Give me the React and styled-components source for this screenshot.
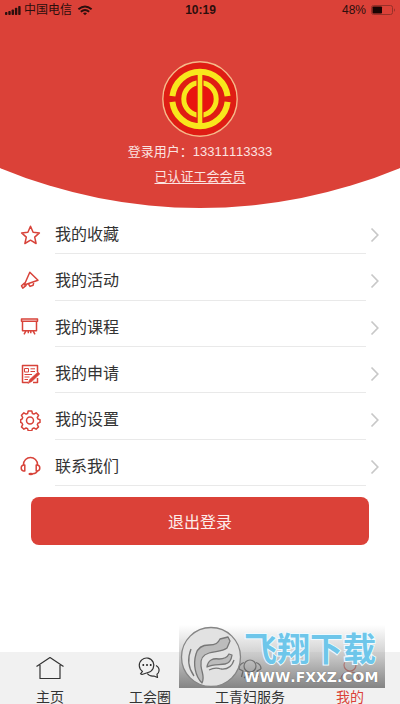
import styled, { createGlobalStyle } from "styled-components";

const GlobalStyle = createGlobalStyle`
  * {
    box-sizing: border-box;
  }
  body {
    margin: 0;
    background: #fff;
    color: #333;
    font-family: "Liberation Sans", "Noto Sans CJK SC", sans-serif;
    font-kerning: none;
  }
`;

const Page = styled.div`
  display: flex;
  flex-direction: column;
  min-height: 100vh;
`;

const Hero = styled.header`
  background: #db4138;
  clip-path: ellipse(130% 520px at 50% calc(100% - 520px));
  padding-bottom: 21px;
`;

const StatusBar = styled.div`
  display: grid;
  grid-template-columns: 1fr auto 1fr;
  align-items: center;
  height: 20px;
  padding: 0 4px 0 5px;
  color: #2c0f0d;
  font-size: 12px;
  line-height: 20px;
`;

const StatusGroup = styled.div`
  display: flex;
  align-items: center;
  justify-content: ${(props) => (props.$end ? "flex-end" : "flex-start")};
  gap: ${(props) => (props.$end ? "5px" : "3px")};
`;

const Clock = styled.time`
  font-weight: bold;
`;

const Profile = styled.div`
  display: flex;
  flex-direction: column;
  align-items: center;
  gap: 4px;
  padding-top: 41px;
  color: #fbe3e1;
  font-size: 13px;
  line-height: 21px;
`;

const ProfileText = styled.p`
  margin: 0;
`;

const ProfileLink = styled.a`
  color: inherit;
  text-decoration: underline;
  text-underline-offset: 2px;
`;

const Menu = styled.nav`
  display: grid;
  grid-auto-rows: 1fr;
  min-height: 278px;
`;

const MenuRow = styled.a`
  display: flex;
  align-items: center;
  position: relative;
  padding: 8px 20px 0;
  color: #333;
  font-size: 16px;
  line-height: 24px;
  text-decoration: none;

  &::after {
    content: "";
    position: absolute;
    right: 34px;
    bottom: 0;
    left: 55px;
    height: 1px;
    background: #e9e9e9;
  }
`;

const MenuLabel = styled.span`
  flex: 1;
  margin-left: 14px;
`;

const LogoutButton = styled.button`
  margin: 11px 31px 20px;
  height: 48px;
  border: 0;
  border-radius: 8px;
  background: #db4138;
  color: #fdeceb;
  font-family: inherit;
  font-size: 16px;
`;

const TabBar = styled.nav`
  display: flex;
  position: relative;
  margin-top: auto;
  background: #f1f1f1;
`;

const Tab = styled.a`
  display: flex;
  flex: 1;
  flex-direction: column;
  align-items: center;
  gap: 6px;
  padding-top: 4px;
  color: ${(props) => (props.$active ? "#db4138" : "#333")};
  font-size: 14px;
  line-height: 14px;
  text-decoration: none;
`;

const Watermark = styled.div`
  display: flex;
  position: absolute;
  right: 15px;
  bottom: 16px;
  width: 206px;
  height: 63px;
  padding: 1px 0 0 1px;
  background: linear-gradient(
    rgba(255, 255, 255, 0.5),
    rgba(170, 170, 170, 0.6) 50%,
    rgba(95, 95, 95, 0.75)
  );
  pointer-events: none;
`;

const WatermarkText = styled.div`
  display: flex;
  flex-direction: column;
  margin-left: 2px;
  padding-top: 4px;
  font-weight: bold;
  white-space: nowrap;
`;

const WatermarkName = styled.span`
  color: #6ec6ea;
  font-size: 33px;
  line-height: 39px;
  paint-order: stroke;
  -webkit-text-stroke: 2px #eefaff;
`;

const WatermarkUrl = styled.span`
  color: #fff;
  font-family: "DejaVu Sans", sans-serif;
  font-size: 14px;
  line-height: 16px;
  text-shadow: 0 0 1px #555;
`;

const Icon = ({ size = 20, stroke = 1.5, children }) => (
  <svg
    width={size}
    height={size}
    viewBox={`0 0 ${size} ${size}`}
    fill="none"
    stroke="currentColor"
    strokeWidth={stroke}
    strokeLinejoin="round"
    aria-hidden="true"
  >
    {children}
  </svg>
);

const MenuIcon = styled.span`
  display: flex;
  color: #d8433a;
`;

const Signal = () => (
  <svg width="16" height="11" viewBox="0 0 16 11" fill="currentColor" aria-hidden="true">
    <rect x="0" y="7" width="2.4" height="3" rx="0.8" />
    <rect x="3.3" y="6" width="2.4" height="4" rx="0.8" />
    <rect x="6.6" y="4.5" width="2.4" height="5.5" rx="0.8" />
    <rect x="9.9" y="2.8" width="2.4" height="7.2" rx="0.8" />
    <rect x="13.2" y="1" width="2.4" height="9" rx="0.8" />
  </svg>
);

const Wifi = () => (
  <svg width="20" height="11" viewBox="0 0 20 11" fill="none" stroke="currentColor" strokeWidth="1.9" aria-hidden="true">
    <path d="M3.400 4.200Q10-1.400 16.600 4.200M5.800 6.700Q10 3.200 14.200 6.700" />
    <path d="M8 8.200Q10 6.600 12 8.200L10 10.300z" fill="currentColor" stroke="none" />
  </svg>
);

const Battery = () => (
  <svg width="25" height="10" viewBox="0 0 25 10" aria-hidden="true">
    <rect x="0.5" y="0.5" width="21" height="9" rx="2" fill="none" stroke="#973029" />
    <rect x="1.5" y="1.5" width="9.5" height="7" rx="0.8" fill="#190403" />
    <path d="M23 3.2q2 1.8 0 3.6z" fill="#973029" />
  </svg>
);

const Emblem = () => (
  <svg width="76" height="76" viewBox="0 0 76 76" fill="none" role="img" aria-label="工会">
    <circle cx="38" cy="38" r="37.2" fill="#df1d14" stroke="#f5b98a" strokeWidth="1.4" />
    <circle cx="38" cy="38" r="18" fill="#e9140f" />
    <path
      d="M10.4 35.2A27.8 27.8 0 0 1 65.6 35.2M10.4 40.8A27.8 27.8 0 0 0 65.6 40.8"
      stroke="#f8e71c"
      strokeWidth="6"
    />
    <circle cx="38" cy="38" r="16.2" stroke="#f8e71c" strokeWidth="5" />
    <path d="M38 14V62" stroke="#df1d14" strokeWidth="7" />
    <path d="M38 9V67" stroke="#f8e71c" strokeWidth="4.6" />
  </svg>
);

const Chevron = () => (
  <svg width="10" height="16" viewBox="0 0 10 16" fill="none" stroke="#c8c8c8" strokeWidth="1.7" aria-hidden="true">
    <path d="M1.5 1.5 7.8 8 1.5 14.5" />
  </svg>
);

const menuItems = [
  {
    label: "我的收藏",
    icon: <path d="m10.5 1.3 2.6 5.9 6.3.7-4.7 4.2 1.4 6.4-5.6-3.3-5.6 3.3 1.4-6.4-4.7-4.2 6.3-.7z" />,
  },
  {
    label: "我的活动",
    icon: (
      <>
        <path d="M9.800 1.200 18 9.300 4.200 14z" />
        <path d="m4.800 11.800-3.300 3 1.300 2.400 3.700-3M8.500 13l1.500 2.400 3.200-1.200.4-2.400" />
      </>
    ),
  },
  {
    label: "我的课程",
    icon: (
      <path d="M1.500 2h16v2.200h-16zM2.500 4.200v9.600h14V4.200M6 13.800l-2 3.500M8.300 13.800v2.500M10.800 13.800v2.500M13 13.800l2 3.500" />
    ),
  },
  {
    label: "我的申请",
    icon: (
      <>
        <path d="M17.500 8V1.500H2.500V18.500H8M17.500 14v4.500H13" />
        <path
          d="M4.500 4.500h4v3.500h-4zM10.500 4.800h4.500M10.500 7.500h4.500M4.500 10.500h7.500M4.500 13h5M4.500 15.500h3.500"
          strokeWidth="1"
        />
        <path d="M19.800 10 12 17.300 8 19.500l1.700-4 8.300-7.500z" fill="currentColor" strokeWidth="0.600" />
      </>
    ),
  },
  {
    label: "我的设置",
    icon: (
      <>
        <path d="M8.200 1h3.600l.6 2.500 1.500.6 2.200-1.300 2.500 2.500-1.300 2.200.6 1.500 2.100.6v2.800l-2.100.8-.6 1.500 1.200 2.200-2.400 2.300-2.200-1.200-1.500.6-.6 2.200H8.200l-.6-2.200-1.500-.6-2.200 1.200-2.400-2.300 1.200-2.200-.6-1.500L0.700 12.400V9.600l1.400-.6.600-1.500-1.200-2.200 2.400-2.500 2.200 1.300 1.500-.6z" />
        <circle cx="10" cy="10.500" r="3.500" />
      </>
    ),
  },
  {
    label: "联系我们",
    icon: (
      <>
        <path d="M3.500 9.500V8.500a7 7 0 0 1 14 0v1M17.500 14.500q-.8 3-5 3.300" />
        <path d="M4.800 9v6H3.500Q1.200 14.700 1.200 12t2.300-3zM16.200 9v6h1.300q2.300-.3 2.300-3t-2.300-3z" />
        <ellipse cx="10.800" cy="18" rx="2.400" ry="1.300" fill="currentColor" stroke="none" />
      </>
    ),
  },
];

const tabs = [
  {
    label: "主页",
    icon: <path d="M0.500 10.500 14 1.500 27.500 10.500M4 9V22.500H24V9" />,
  },
  {
    label: "工会圈",
    icon: (
      <>
        <path d="M6.500 15.400A7.300 7.300 0 1 1 12 16.500L6 18.500 4.500 17.800z" />
        <path d="M20 9.500q3.600 2 3 5.500-.4 2.200-2 3.300l.5 3.200-3.600-1.500q-4.500.5-6.600-2.500" />
        <path d="M6.500 9h1.600M10.200 9h1.600M13.900 9h1.600" strokeWidth="1.800" />
      </>
    ),
  },
  {
    label: "工青妇服务",
    icon: (
      <>
        <circle cx="14" cy="10" r="6" />
        <path d="M3 13q0-5 5-6.500M3 13l4 2-1.500 6M25 13q0-5-5-6.500M25 13l-4 2 1.500 6M8 22q6-7 12 0" />
      </>
    ),
  },
  {
    label: "我的",
    active: true,
    icon: (
      <>
        <circle cx="14" cy="9" r="6" />
        <path d="M4.500 24q1-8 9.500-8t9.500 8z" />
      </>
    ),
  },
];

const WatermarkLogo = () => (
  <svg width="62" height="62" viewBox="0 0 62 62" aria-hidden="true">
    <circle cx="31" cy="31" r="29.500" fill="#e2e2e2" stroke="#858585" strokeWidth="1.300" />
    <g fill="#bcbcbc" stroke="#777" strokeWidth="1.300" strokeLinejoin="round">
      <path d="M22 57C15 50 13 38 16 28c2-7 7-9 13-9 7 0 9-2 11-6l8-2 2 4-3 7c-5 4-12 3-18 5-7 2-9 6-8 13 1 8 4 11 1 17z" />
      <path d="M27 41c1-7 6-9 12-8 5 0 8-1 10-5l3 1q-1 8-7 9c-6 1-12 0-18 3z" />
      <path d="M11 23c-4 10-2 20 3 27M29 44q6-3 12-1 10 1 13-9" fill="none" />
    </g>
  </svg>
);

const App = () => {
  return (
    <Page>
      <GlobalStyle />
      <Hero>
        <StatusBar>
          <StatusGroup>
            <Signal />
            <span>中国电信</span>
            <Wifi />
          </StatusGroup>
          <Clock>10:19</Clock>
          <StatusGroup $end>
            <span>48%</span>
            <Battery />
          </StatusGroup>
        </StatusBar>
        <Profile>
          <Emblem />
          <ProfileText>登录用户：13311113333</ProfileText>
          <ProfileLink href="#member">已认证工会会员</ProfileLink>
        </Profile>
      </Hero>
      <Menu>
        {menuItems.map((item) => (
          <MenuRow href="#menu" key={item.label}>
            <MenuIcon>
              <Icon size={21}>{item.icon}</Icon>
            </MenuIcon>
            <MenuLabel>{item.label}</MenuLabel>
            <Chevron />
          </MenuRow>
        ))}
      </Menu>
      <LogoutButton type="button">退出登录</LogoutButton>
      <TabBar>
        {tabs.map((tab) => (
          <Tab href="#tab" key={tab.label} $active={tab.active}>
            <Icon size={28} stroke={1.2}>
              {tab.icon}
            </Icon>
            <span>{tab.label}</span>
          </Tab>
        ))}
        <Watermark>
          <WatermarkLogo />
          <WatermarkText>
            <WatermarkName>飞翔下载</WatermarkName>
            <WatermarkUrl>WWW.FXXZ.COM</WatermarkUrl>
          </WatermarkText>
        </Watermark>
      </TabBar>
    </Page>
  );
};

export default App;
